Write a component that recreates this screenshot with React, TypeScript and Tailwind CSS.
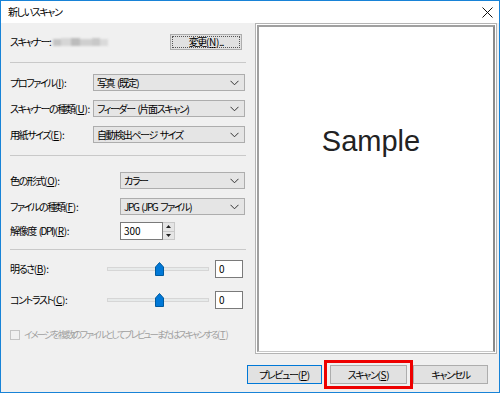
import React from 'react';

const jp = "font-['Noto_Sans_CJK_JP','Noto_Sans',sans-serif] [font-feature-settings:'palt']";

const Chevron = () => (
  <svg width="9" height="6" viewBox="0 0 9 6" className="shrink-0">
    <polyline points="0.5,0.8 4.5,4.8 8.5,0.8" fill="none" stroke="#333" strokeWidth="1" />
  </svg>
);

// mnemonic: (X) with underlined key
const Mn: React.FC<{ k: string }> = ({ k }) => (
  <span className="tracking-[-0.3px]">
    (<u className="underline-offset-1">{k}</u>)
  </span>
);

const Select: React.FC<{ value: string; width: string }> = ({ value, width }) => (
  <div className={`${width} h-[17px] bg-[#e5e5e5] border border-[#adadad] flex items-center justify-between pl-[3px] pr-[5px]`}>
    <span className="leading-none">{value}</span>
    <Chevron />
  </div>
);

const Row: React.FC<{ label: React.ReactNode; labelWidth: string; mt: string; children: React.ReactNode }> = ({
  label,
  labelWidth,
  mt,
  children,
}) => (
  <div className={`flex items-center ${mt}`}>
    <div className={`${labelWidth} shrink-0 leading-none whitespace-nowrap`}>{label}</div>
    {children}
  </div>
);

const Separator: React.FC<{ mt: string }> = ({ mt }) => <div className={`${mt} h-px bg-[#c9c9c9] w-[236px]`} />;

const Slider = () => (
  <div className="relative w-[102px] h-[14px] flex items-center">
    <div className="w-full h-[4px] bg-[#e7eaea] border border-[#d6d6d6]" />
    {/* thumb sits over the track */}
    <svg width="9" height="14" viewBox="0 0 9 14" className="absolute left-[48px] top-0">
      <path d="M0.5 5 L4.5 0.5 L8.5 5 V13.5 H0.5 Z" fill="#0078d7" stroke="#005a9e" strokeWidth="1" />
    </svg>
  </div>
);

const ValueBox = () => (
  <div className="ml-[6px] w-[28px] h-[18px] bg-white border border-[#7a7a7a] flex items-center pl-[3px] leading-none">0</div>
);

export default function App() {
  return (
    <div className={`w-[500px] h-[393px] border border-[#1883d7] bg-white flex flex-col text-[10px] tracking-[-1.4px] [word-spacing:2px] text-black ${jp}`}>
      {/* title bar */}
      <div className="h-[22px] shrink-0 flex items-center justify-between pl-[7px] pr-[6px]">
        <span className="leading-none">新しいスキャン</span>
        <svg width="11" height="11" viewBox="0 0 11 11">
          <path d="M0.5 0.5 L10.5 10.5 M10.5 0.5 L0.5 10.5" stroke="#111" strokeWidth="1" />
        </svg>
      </div>

      <div className="flex-1 bg-[#f0f0f0] flex flex-col">
        <div className="flex h-[331px]">
          {/* left form */}
          <div className="w-[245px] shrink-0 pl-[9px] flex flex-col">
            <div className="mt-[11px] h-[16px] flex items-center">
              <span className="leading-none">スキャナー:</span>
              <div className="ml-[3px] flex items-center gap-0 blur-[1px]">
                <div className="w-[8px] h-[7px] bg-[#c4c4c4]" />
                <div className="w-[10px] h-[8px] bg-[#d6d6d6]" />
                <div className="w-[9px] h-[8px] bg-[#bcbcbc]" />
                <div className="w-[12px] h-[7px] bg-[#cfcfcf]" />
                <div className="w-[8px] h-[8px] bg-[#c8c8c8]" />
                <div className="w-[8px] h-[7px] bg-[#dadada]" />
              </div>
              <div className="ml-auto mr-[4px] w-[72px] h-[16px] bg-[#e1e1e1] border border-[#adadad] outline outline-1 outline-dotted outline-[#555] -outline-offset-[3px] flex items-center justify-center leading-none">
                変更<Mn k="N" />...
              </div>
            </div>

            <Separator mt="mt-[12px]" />

            <Row label={<>プロファイル<Mn k="I" />:</>} labelWidth="w-[83px]" mt="mt-[11px]">
              <Select value="写真 (既定)" width="w-[152px]" />
            </Row>
            <Row label={<>スキャナーの種類<Mn k="U" />:</>} labelWidth="w-[83px]" mt="mt-[9px]">
              <Select value="フィーダー (片面スキャン)" width="w-[152px]" />
            </Row>
            <Row label={<>用紙サイズ<Mn k="E" />:</>} labelWidth="w-[83px]" mt="mt-[9px]">
              <Select value="自動検出ページ サイズ" width="w-[152px]" />
            </Row>

            <Separator mt="mt-[12px]" />

            <Row label={<>色の形式<Mn k="O" />:</>} labelWidth="w-[110px]" mt="mt-[16px]">
              <Select value="カラー" width="w-[125px]" />
            </Row>
            <Row label={<>ファイルの種類<Mn k="F" />:</>} labelWidth="w-[110px]" mt="mt-[9px]">
              <Select value="JPG (JPG ファイル)" width="w-[125px]" />
            </Row>
            <Row label={<>解像度 (DPI)<Mn k="R" />:</>} labelWidth="w-[110px]" mt="mt-[7px]">
              <div className="flex h-[18px]">
                <div className="w-[43px] bg-white border border-[#7a7a7a] flex items-center pl-[3px] leading-none tracking-normal">300</div>
                <div className="w-[12px] flex flex-col border-y border-r border-[#c8c8c8] bg-[#f0f0f0]">
                  <div className="flex-1 flex items-center justify-center border-b border-[#c8c8c8] bg-[#e5e5e5]">
                    <svg width="5" height="3" viewBox="0 0 5 3"><path d="M2.5 0 L5 3 H0 Z" fill="#222" /></svg>
                  </div>
                  <div className="flex-1 flex items-center justify-center bg-[#e5e5e5]">
                    <svg width="5" height="3" viewBox="0 0 5 3"><path d="M0 0 H5 L2.5 3 Z" fill="#222" /></svg>
                  </div>
                </div>
              </div>
            </Row>

            <Separator mt="mt-[9px]" />

            <Row label={<>明るさ<Mn k="B" />:</>} labelWidth="w-[97px]" mt="mt-[10px]">
              <div className="flex items-center h-[18px]">
                <Slider />
                <ValueBox />
              </div>
            </Row>
            <Row label={<>コントラスト<Mn k="C" />:</>} labelWidth="w-[97px]" mt="mt-[13px]">
              <div className="flex items-center h-[18px]">
                <Slider />
                <ValueBox />
              </div>
            </Row>

            <div className="mt-[21px] flex items-center text-[#a0a0a0]">
              <div className="w-[10px] h-[10px] border border-[#c4c4c4] bg-[#f0f0f0] shrink-0" />
              <span className="ml-[4px] leading-none whitespace-nowrap text-[9.5px] tracking-[-2px]">
                イメージを複数のファイルとしてプレビューまたはスキャンする<Mn k="T" />
              </span>
            </div>
          </div>

          {/* preview panel */}
          <div className="ml-[9px] w-[242px] h-[331px] border border-[#b4b4b4] bg-white p-px">
            <div className="w-full h-full border-l-2 border-t-2 border-r-2 border-b border-l-[#a0a0a0] border-t-[#a0a0a0] border-r-[#8a8a8a] border-b-[#c8c8c8] flex items-start justify-center pr-[10px]">
              <span className="mt-[100px] text-[29px] tracking-normal text-[#222] font-['Liberation_Sans','Open_Sans',sans-serif] leading-none">
                Sample
              </span>
            </div>
          </div>
        </div>

        {/* buttons */}
        <div className="mt-[11px] pl-[246px] flex items-center">
          <div className="w-[75px] h-[19px] bg-[#e1e1e1] border border-[#0078d7] flex items-center justify-center leading-none">
            プレビュー<Mn k="P" />
          </div>
          <div className="relative ml-[8px] w-[77px] h-[19px] bg-[#e1e1e1] border border-[#adadad] flex items-center justify-center leading-none">
            スキャン<Mn k="S" />
            <div className="absolute -left-[7px] -right-[7px] -top-[6px] -bottom-[6px] border-[3px] border-[#ee0000]" />
          </div>
          <div className="ml-[6px] w-[75px] h-[19px] bg-[#e1e1e1] border border-[#adadad] flex items-center justify-center leading-none">
            キャンセル
          </div>
        </div>
      </div>
    </div>
  );
}
